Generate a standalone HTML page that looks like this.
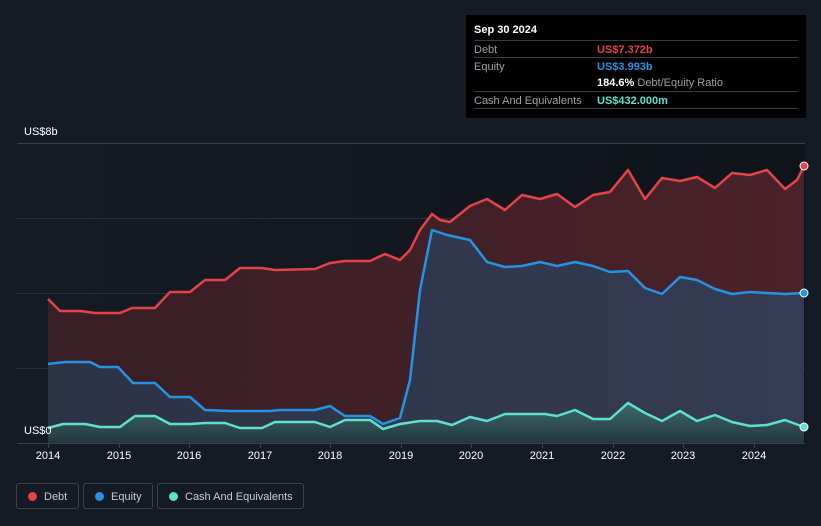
<!DOCTYPE html>
<html><head><style>
body{margin:0;background:#151b25;font-family:"Liberation Sans",sans-serif;width:821px;height:526px;overflow:hidden;position:relative}
.tt{position:absolute;left:466px;top:15px;width:340px;height:103px;background:#000}
.tt .h{position:absolute;left:8px;top:9px;color:#fff;font-size:11px;font-weight:bold}
.row{position:absolute;left:8px;width:324px;border-top:1px solid #3a3a3a;height:17px;font-size:11px;color:#9aa0a6}
.row span{position:absolute;left:123px;top:3px;font-weight:bold}
.row b{position:absolute;left:0;top:3px;font-weight:normal}
.lg{position:absolute;top:483px;height:26px;border:1px solid #3c424c;border-radius:3px;color:#c8ccd2;font-size:11px;line-height:26px;box-sizing:border-box}
.lg i{position:absolute;left:11px;top:8px;width:9px;height:9px;border-radius:50%}
.lg span{position:absolute;left:27px;top:0}
.yr{position:absolute;top:450px;color:#fff;font-size:11px;transform:translateX(-50%)}
</style></head><body>
<svg width="821" height="526" style="position:absolute;left:0;top:0">
<defs>
<linearGradient id="bg" x1="0" y1="0" x2="1" y2="0"><stop offset="0" stop-color="#151b25"/><stop offset="1" stop-color="#0f131a"/></linearGradient>
<linearGradient id="cg" x1="0" y1="0" x2="0" y2="1"><stop offset="0" stop-color="#3c6b6e"/><stop offset="1" stop-color="#24363e"/></linearGradient>
<linearGradient id="dg" x1="0" y1="0" x2="1" y2="0"><stop offset="0" stop-color="#381e25"/><stop offset="1" stop-color="#4a2229"/></linearGradient>
<linearGradient id="eg" x1="0" y1="0" x2="1" y2="0"><stop offset="0" stop-color="#2c3346"/><stop offset="1" stop-color="#353b52"/></linearGradient>
</defs>
<rect x="48" y="143" width="757" height="300" fill="url(#bg)"/>
<g stroke="#2a303a" stroke-width="1"><line x1="17" y1="143.5" x2="805" y2="143.5" stroke="#3a404a"/><line x1="17" y1="218.5" x2="805" y2="218.5"/><line x1="17" y1="293.5" x2="805" y2="293.5"/><line x1="17" y1="368.5" x2="805" y2="368.5"/></g>
<line x1="17" y1="443.5" x2="805" y2="443.5" stroke="#3a404a"/>
<g stroke="#3a404a"><line x1="48.5" y1="443" x2="48.5" y2="448"/><line x1="119.5" y1="443" x2="119.5" y2="448"/><line x1="189.5" y1="443" x2="189.5" y2="448"/><line x1="260.5" y1="443" x2="260.5" y2="448"/><line x1="330.5" y1="443" x2="330.5" y2="448"/><line x1="401.5" y1="443" x2="401.5" y2="448"/><line x1="471.5" y1="443" x2="471.5" y2="448"/><line x1="542.5" y1="443" x2="542.5" y2="448"/><line x1="613.5" y1="443" x2="613.5" y2="448"/><line x1="683.5" y1="443" x2="683.5" y2="448"/><line x1="754.5" y1="443" x2="754.5" y2="448"/></g>
<polygon fill="url(#dg)" points="48,443 48,299 60,311 80,311 95,313 120,313 132,308 155,308 170,292 190,292 205,280 225,280 240,268 262,268 275,270 315,269 330,263 345,261 370,261 385,254 400,260 410,250 420,230 432,214 440,220 450,222 470,206 487,199 505,210 522,195 540,199 557,194 575,207 593,195 610,192 628,170 645,199 662,178 680,181 697,177 715,188 732,173 750,175 767,170 785,189 797,180 804,166 804,443"/>
<polygon fill="url(#eg)" points="48,443 48,364 65,362 90,362 100,367 118,367 133,383 155,383 170,397 190,397 205,410 230,411 270,411 280,410 315,410 330,406 345,416 370,416 383,424 400,418 410,380 420,290 432,230 447,235 470,240 487,262 505,267 522,266 540,262 557,266 575,262 593,266 610,272 628,271 645,288 662,294 680,277 697,280 715,289 732,294 750,292 767,293 785,294 804,293 804,443"/>
<polygon fill="url(#cg)" points="48,443 48,428 63,424 85,424 100,427 120,427 135,416 155,416 170,424 190,424 205,423 225,423 240,428 262,428 275,422 315,422 330,427 345,420 370,420 383,429 400,424 420,421 437,421 452,425 470,417 487,421 505,414 545,414 557,416 575,410 593,419 610,419 628,403 645,413 662,421 680,411 697,421 715,415 732,422 750,426 767,425 785,420 804,427 804,443"/>
<g fill="none" stroke-width="2.5" stroke-linejoin="round">
<polyline stroke="#e5434a" points="48,299 60,311 80,311 95,313 120,313 132,308 155,308 170,292 190,292 205,280 225,280 240,268 262,268 275,270 315,269 330,263 345,261 370,261 385,254 400,260 410,250 420,230 432,214 440,220 450,222 470,206 487,199 505,210 522,195 540,199 557,194 575,207 593,195 610,192 628,170 645,199 662,178 680,181 697,177 715,188 732,173 750,175 767,170 785,189 797,180 804,166"/>
<polyline stroke="#2394e4" points="48,364 65,362 90,362 100,367 118,367 133,383 155,383 170,397 190,397 205,410 230,411 270,411 280,410 315,410 330,406 345,416 370,416 383,424 400,418 410,380 420,290 432,230 447,235 470,240 487,262 505,267 522,266 540,262 557,266 575,262 593,266 610,272 628,271 645,288 662,294 680,277 697,280 715,289 732,294 750,292 767,293 785,294 804,293"/>
<polyline stroke="#5ee0cc" points="48,428 63,424 85,424 100,427 120,427 135,416 155,416 170,424 190,424 205,423 225,423 240,428 262,428 275,422 315,422 330,427 345,420 370,420 383,429 400,424 420,421 437,421 452,425 470,417 487,421 505,414 545,414 557,416 575,410 593,419 610,419 628,403 645,413 662,421 680,411 697,421 715,415 732,422 750,426 767,425 785,420 804,427"/>
</g>
<circle cx="804" cy="166" r="4" fill="#e5434a" stroke="#fff" stroke-width="1"/>
<circle cx="804" cy="293" r="4" fill="#2394e4" stroke="#fff" stroke-width="1"/>
<circle cx="804" cy="427" r="4" fill="#5ee0cc" stroke="#fff" stroke-width="1"/>
</svg>
<div style="position:absolute;left:24px;top:126px;color:#fff;font-size:11px">US$8b</div>
<div style="position:absolute;left:24px;top:425px;color:#fff;font-size:11px">US$0</div>
<div class="yr" style="left:48px">2014</div><div class="yr" style="left:119px">2015</div><div class="yr" style="left:189px">2016</div><div class="yr" style="left:260px">2017</div><div class="yr" style="left:330px">2018</div><div class="yr" style="left:401px">2019</div><div class="yr" style="left:471px">2020</div><div class="yr" style="left:542px">2021</div><div class="yr" style="left:613px">2022</div><div class="yr" style="left:683px">2023</div><div class="yr" style="left:754px">2024</div>
<div class="tt"><div class="h">Sep 30 2024</div>
<div class="row" style="top:25px"><b>Debt</b><span style="color:#e5434a">US$7.372b</span></div>
<div class="row" style="top:42px"><b>Equity</b><span style="color:#2394e4">US$3.993b</span></div>
<div class="row" style="top:59px;border-top:none"><span style="color:#fff">184.6% <em style="font-style:normal;font-weight:normal;color:#9aa0a6">Debt/Equity Ratio</em></span></div>
<div class="row" style="top:76px"><b>Cash And Equivalents</b><span style="color:#5ee0cc">US$432.000m</span></div>
<div class="row" style="top:93px;height:0"></div>
</div>
<div class="lg" style="left:16px;width:63px"><i style="background:#e5434a"></i><span>Debt</span></div>
<div class="lg" style="left:83px;width:70px"><i style="background:#2394e4"></i><span>Equity</span></div>
<div class="lg" style="left:157px;width:147px"><i style="background:#5ee0cc"></i><span>Cash And Equivalents</span></div>
</body></html>
